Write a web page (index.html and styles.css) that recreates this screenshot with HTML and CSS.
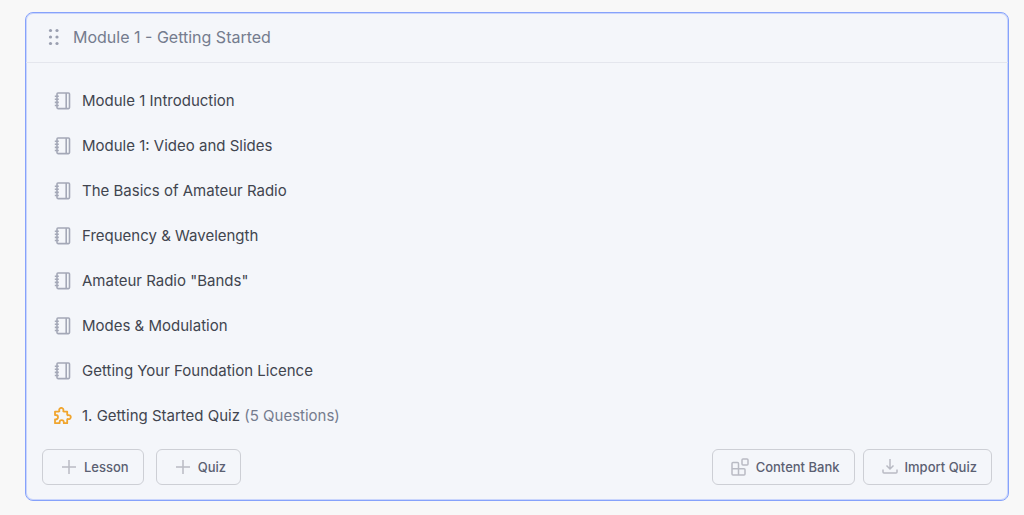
FILE: index.html
```html
<!DOCTYPE html>
<html lang="en">
<head>
    <meta charset="UTF-8">
    <title>Course Builder</title>
    <link rel="stylesheet" href="styles.css">
</head>
<body>

<!-- Shared icons -->
<svg class="sprite" aria-hidden="true">
    <symbol id="icon-lesson" viewBox="0 0 18 18">
        <rect x="3" y="1" width="12.5" height="15.6" rx="1"/>
        <path d="M12.2 1v15.6M.8 4.2h4M.8 7.3h4M.8 10.4h4M.8 13.5h4"/>
    </symbol>
    <symbol id="icon-plus" viewBox="0 0 14 14">
        <path d="M7 0v14M0 7h14"/>
    </symbol>
</svg>

<div class="module">
    <div class="module-header">
        <svg class="drag" width="12" height="18" viewBox="0 0 12 18">
            <circle cx="2.5" cy="2.5" r="1.6"/><circle cx="9" cy="2.5" r="1.6"/>
            <circle cx="2.5" cy="9" r="1.6"/><circle cx="9" cy="9" r="1.6"/>
            <circle cx="2.5" cy="15.5" r="1.6"/><circle cx="9" cy="15.5" r="1.6"/>
        </svg>
        <h2>Module 1 - Getting Started</h2>
    </div>

    <ul class="items">
        <li><svg class="icon"><use href="#icon-lesson"/></svg>Module 1 Introduction</li>
        <li><svg class="icon"><use href="#icon-lesson"/></svg>Module 1: Video and Slides</li>
        <li><svg class="icon"><use href="#icon-lesson"/></svg>The Basics of Amateur Radio</li>
        <li><svg class="icon"><use href="#icon-lesson"/></svg>Frequency &amp; Wavelength</li>
        <li><svg class="icon"><use href="#icon-lesson"/></svg>Amateur Radio "Bands"</li>
        <li><svg class="icon"><use href="#icon-lesson"/></svg>Modes &amp; Modulation</li>
        <li><svg class="icon"><use href="#icon-lesson"/></svg>Getting Your Foundation Licence</li>
        <li>
            <svg class="icon icon-quiz" viewBox="0 0 18 18">
                <path d="M1 4.6h3.6c.7 0 .9-.5.7-1a2.1 2.1 0 1 1 4 0c-.2.5 0 1 .7 1h3.2v3c0 .6.5.8 1 .6a2 2 0 1 1 0 3.8c-.5-.2-1 0-1 .6v3.6h-3.4v-.9a2.1 2.1 0 0 0-4.2 0v.9H1v-3.8h.8a2.2 2.2 0 0 0 0-4.4H1z"/>
            </svg>
            <span>1. Getting Started Quiz <span class="count">(5 Questions)</span></span>
        </li>
    </ul>

    <div class="actions">
        <button type="button"><svg class="plus"><use href="#icon-plus"/></svg>Lesson</button>
        <button type="button"><svg class="plus"><use href="#icon-plus"/></svg>Quiz</button>
        <div class="actions-right">
            <button type="button">
                <svg width="18" height="18" viewBox="0 0 18 18">
                    <path d="M7.5 17V5.5a1 1 0 0 0-1-1H2a1 1 0 0 0-1 1V16a1 1 0 0 0 1 1h11a1 1 0 0 0 1-1v-4.3a1 1 0 0 0-1-1H1"/>
                    <rect x="11" y="1" width="6" height="6" rx="1"/>
                </svg>Content Bank
            </button>
            <button type="button">
                <svg width="16" height="18" viewBox="0 0 16 18">
                    <path d="M8 1v10M4.5 7.5L8 11l3.5-3.5M1 11.5V14a1 1 0 0 0 1 1h12a1 1 0 0 0 1-1v-2.5"/>
                </svg>Import Quiz
            </button>
        </div>
    </div>
</div>

</body>
</html>
```

FILE: styles.css
```css
* { box-sizing: border-box; }
body { margin: 0; padding: 12px 15px 12px 25px; background: #f8f8f8; font-family: Inter, sans-serif; color: #41454f; }
svg { fill: none; stroke: #a4a8b7; stroke-width: 1.6; flex-shrink: 0; }
.sprite { position: absolute; width: 0; height: 0; }

.module { background: #f4f6fa; border: 1px solid #86a2fb; border-radius: 8px; box-shadow: inset 0 0 0 1px #c9d5fc; }
.module-header { display: flex; align-items: center; gap: 13px; height: 50px; padding: 0 22px 2px; border-bottom: 1px solid #e4e6ed; }
.module-header h2 { margin: 0; font-size: 16px; font-weight: 400; line-height: 24px; color: #757c8e; }
.drag { fill: #9a9fb0; stroke: none; }

.items { list-style: none; margin: 0; padding: 15px 28px 0; }
.items li { display: flex; align-items: center; gap: 10px; height: 45px; font-size: 15px; line-height: 24px; }
.icon { width: 18px; height: 18px; }
.icon-quiz { stroke: #f0a52e; stroke-width: 1.8; stroke-linejoin: round; }
.count { color: #757c8e; }

.actions { display: flex; gap: 12px; padding: 11px 16px 15px; }
.actions-right { display: flex; gap: 8px; margin-left: auto; }
button { display: flex; align-items: center; gap: 7px; height: 36px; padding: 0 14px 0 18px; border: 1px solid #cdcfd5; border-radius: 6px; background: transparent; font-family: inherit; font-size: 13px; font-weight: 500; color: #5b6072; cursor: pointer; }
button:hover { background: #e9edf8; }
button svg { stroke: #b9bbc4; stroke-width: 1.5; }
.plus { width: 14px; height: 14px; margin: 0 1px; }
```
